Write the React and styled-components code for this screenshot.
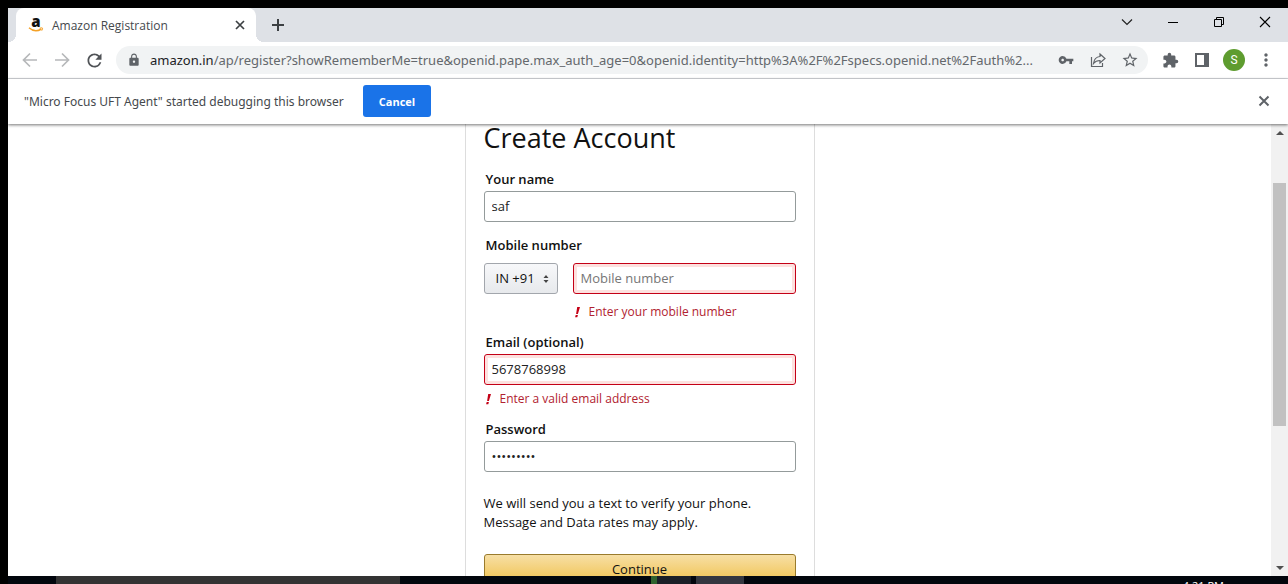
import React from "react";
import styled, { createGlobalStyle } from "styled-components";
import { MdLock, MdVpnKey, MdStarBorder, MdExtension, MdMoreVert, MdRefresh } from "react-icons/md";

const GlobalStyle = createGlobalStyle`
  * { box-sizing: border-box; }
  body { margin: 0; background: #000; font-family: "Open Sans", "Noto Sans", sans-serif; }
  button, input, select { font: inherit; margin: 0; }
`;

const Desktop = styled.div`
  display: flex;
  flex-direction: column;
  height: 100vh;
  padding: 8px 0 0 8px;
  overflow: hidden;
  background: #000;
`;

const Window = styled.div`
  flex: 1;
  min-height: 0;
  display: flex;
  flex-direction: column;
  background: #fff;
`;

const TabStrip = styled.header`
  display: flex;
  align-items: stretch;
  height: 34px;
  padding-left: 8px;
  background: #dee1e6;
`;

const Tab = styled.div`
  position: relative;
  display: flex;
  align-items: center;
  gap: 8px;
  width: 240px;
  padding: 0 8px 0 12px;
  border-radius: 8px 8px 0 0;
  background: #fff;
  font-size: 12px;
  color: #45494d;

  &::before, &::after {
    content: "";
    position: absolute;
    bottom: 0;
    width: 8px;
    height: 8px;
  }
  &::before {
    right: 100%;
    background: radial-gradient(circle at 0 0, #dee1e6 8px, #fff 8px);
  }
  &::after {
    left: 100%;
    background: radial-gradient(circle at 100% 0, #dee1e6 8px, #fff 8px);
  }
`;

const TabTitle = styled.span`
  flex: 1;
  white-space: nowrap;
`;

const IconButton = styled.button`
  display: flex;
  align-items: center;
  justify-content: center;
  flex: none;
  width: ${(p) => p.$width || 32}px;
  height: ${(p) => p.$height || 32}px;
  padding: 0;
  border: 0;
  background: transparent;
  color: ${(p) => p.$color || "#5f6368"};
`;

const WindowControls = styled.div`
  display: flex;
  margin-left: auto;
`;

const Toolbar = styled.div`
  display: flex;
  align-items: center;
  height: 37px;
  padding: 0 6px;
  border-bottom: 1px solid #d5d8dc;
`;

const Omnibox = styled.div`
  flex: 1;
  min-width: 0;
  display: flex;
  align-items: center;
  gap: 9px;
  height: 28px;
  margin: 0 6px;
  padding: 0 2px 0 11px;
  border-radius: 14px;
  background: #f1f3f4;
  color: #5f6368;
`;

const Url = styled.div`
  flex: 1;
  min-width: 0;
  overflow: hidden;
  white-space: nowrap;
  font-family: "Noto Sans", sans-serif;
  font-size: 13px;
  line-height: 20px;
  color: #64686c;

  b { font-weight: 400; color: #202124; }
`;

const OmniboxActions = styled.div`
  display: flex;
`;

const Avatar = styled.button`
  width: 22px;
  height: 22px;
  margin: 0 5px;
  padding: 0;
  border: 0;
  border-radius: 50%;
  background: #5e9c2f;
  color: #fff;
  font-family: Roboto, sans-serif;
  font-size: 12px;
  line-height: 22px;
`;

const InfoBar = styled.div`
  position: relative;
  display: flex;
  align-items: center;
  gap: 12px;
  height: 45px;
  padding: 0 8px 1px 16px;
  background: #fff;
  box-shadow: 0 1px 3px #0000008c;
  font-family: "Noto Sans", sans-serif;
  font-size: 12px;
  color: #45494d;
`;

const InfoText = styled.span`
  min-width: 327px;
`;

const CancelButton = styled.button`
  width: 68px;
  height: 32px;
  padding: 0;
  border: 0;
  border-radius: 3px;
  background: #1a73e8;
  color: #fff;
  font-family: "Open Sans", sans-serif;
  font-size: 11px;
  font-weight: 700;
`;

const InfoClose = styled(IconButton)`
  margin-left: auto;
`;

const Viewport = styled.div`
  flex: 1;
  min-height: 0;
  display: flex;
`;

const Page = styled.main`
  flex: 1;
  display: flex;
  justify-content: center;
  overflow: hidden;
`;

const Card = styled.form`
  width: 350px;
  height: max-content;
  padding: 0 18px 24px;
  border: solid #ddd;
  border-width: 0 1px;
  font-size: 13px;
  line-height: 19px;
  color: #111;
`;

const Heading = styled.h1`
  margin: 0 0 18px;
  font-size: 27px;
  font-weight: 400;
  line-height: 28px;
`;

const Field = styled.div`
  display: flex;
  flex-direction: column;
  gap: ${(p) => p.$gap || 2}px;
  margin-bottom: ${(p) => (p.$invalid ? 12 : 14)}px;
`;

const Label = styled.label`
  padding-left: 2px;
  font-weight: 600;
`;

const TextInput = styled.input`
  width: 100%;
  height: 31px;
  padding: 0 7px 1px;
  border: 1px solid ${(p) => (p.$invalid ? "#c40016" : "#949b9b")};
  border-radius: 3px;
  outline: 0;
  background: #fff;
  box-shadow: ${(p) => (p.$invalid ? "inset 0 0 0 3px #fde1df" : "none")};
  color: #222;

  &::placeholder { color: #767676; opacity: 1; }
`;

const PhoneRow = styled.div`
  display: grid;
  grid-template-columns: 74px 1fr;
  column-gap: 15px;
`;

const CodePicker = styled.div`
  display: grid;
  align-items: center;
  height: 31px;

  > * { grid-area: 1 / 1; }
  svg { justify-self: end; margin-right: 9px; pointer-events: none; }
`;

const CodeSelect = styled.select`
  appearance: none;
  width: 100%;
  height: 31px;
  padding: 0 11px;
  border: 1px solid #a2a6ac;
  border-radius: 3px;
  background: linear-gradient(#f7f8fa, #e7e9ec);
  color: #111;
`;

const ErrorText = styled.p`
  grid-column: 2;
  display: flex;
  align-items: center;
  gap: 9px;
  margin: ${(p) => (p.$inRow ? 9 : 3)}px 0 0;
  padding-left: 2px;
  font-size: 12px;
  line-height: 18px;
  color: #b12230;
`;

const Notice = styled.p`
  margin: 22px 0;
`;

const Submit = styled.button`
  width: 100%;
  height: 31px;
  padding: 0;
  border: 1px solid #9a7b2c;
  border-radius: 3px;
  background: linear-gradient(#f7dfa5, #f0c14b);
  color: #111;
`;

const Scrollbar = styled.div`
  display: flex;
  flex-direction: column;
  align-items: center;
  width: 17px;
  background: #f1f1f1;
`;

const ScrollArrow = styled(IconButton)`
  width: 17px;
  height: 17px;
`;

const ScrollTrack = styled.div`
  flex: 1;
  display: grid;
  grid-template-rows: 42fr 243fr 133fr;
  width: 13px;

  &::before {
    content: "";
    grid-row: 2;
    background: #c1c1c1;
  }
`;

const Taskbar = styled.footer`
  display: flex;
  flex: none;
  height: 8px;
  overflow: hidden;
  background: #02060d;
`;

const TaskItem = styled.div`
  width: ${(p) => p.$width}px;
  background: ${(p) => p.$color || "transparent"};
`;

const Clock = styled.time`
  margin: 5px 64px 0 auto;
  font-size: 11px;
  line-height: 10px;
  color: #fff;
`;

const Stroke = ({ d, size = 16, width = 1, ...rest }) => (
  <svg width={size} height={size} viewBox={`0 0 ${size} ${size}`} fill="none" stroke="currentColor" strokeWidth={width} aria-hidden="true" {...rest}>
    <path d={d} />
  </svg>
);

const AmazonIcon = () => (
  <svg width="16" height="16" viewBox="0 0 16 16" overflow="visible" aria-hidden="true">
    <text x="8" y="10" textAnchor="middle" fontFamily="Open Sans, sans-serif" fontWeight="800" fontSize="15" fill="#111">a</text>
    <path d="M1 10.8 Q7 16.2 13.4 12" fill="none" stroke="#f4a127" strokeWidth="1.5" />
    <path d="M11.6 11.2 Q14.6 10.4 14.6 11.2 Q14.6 12.8 13.7 13.7" fill="none" stroke="#f4a127" />
  </svg>
);

const ErrorMark = () => (
  <svg width="5" height="12" viewBox="0 0 5 12" fill="#c40016" aria-hidden="true">
    <path d="M2.2 1H5L2.9 8H1.1ZM.7 9H2.9L2.3 11.2H.1Z" />
  </svg>
);

export default function App() {
  return (
    <Desktop>
      <GlobalStyle />
      <Window>
        <TabStrip>
          <Tab>
            <AmazonIcon />
            <TabTitle>Amazon Registration</TabTitle>
            <IconButton $width={16} $height={16} $color="#3c4043" aria-label="Close tab">
              <Stroke d="M4 4 12 12M12 4 4 12" width={1.7} />
            </IconButton>
          </Tab>
          <IconButton $width={44} $height={34} $color="#3c4043" aria-label="New tab">
            <Stroke d="M8 2V14M2 8H14" width={2} />
          </IconButton>
          <WindowControls>
            <IconButton $width={46} $height={28} $color="#222" aria-label="Search tabs">
              <Stroke d="M3 5.5 8 10.5 13 5.5" width={1.2} />
            </IconButton>
            <IconButton $width={46} $height={28} $color="#000" aria-label="Minimize">
              <Stroke d="M3 8.5H13" />
            </IconButton>
            <IconButton $width={46} $height={28} $color="#000" aria-label="Restore">
              <Stroke d="M3.5 5.5H10.5V12.5H3.5ZM5.5 5.5V3.5H12.5V10.5H10.5" />
            </IconButton>
            <IconButton $width={46} $height={28} $color="#000" aria-label="Close">
              <Stroke d="M3 3 13 13M13 3 3 13" width={1.1} />
            </IconButton>
          </WindowControls>
        </TabStrip>

        <Toolbar>
          <IconButton $color="#b6b8ba" aria-label="Back">
            <Stroke d="M15 8H2M8 1.5 1.5 8 8 14.5" width={1.7} />
          </IconButton>
          <IconButton $color="#b6b8ba" aria-label="Forward">
            <Stroke d="M1 8H14M8 1.5 14.5 8 8 14.5" width={1.7} />
          </IconButton>
          <IconButton aria-label="Reload"><MdRefresh size={21} color="#505357" /></IconButton>
          <Omnibox>
            <MdLock size={14} />
            <Url>
              <b>amazon.in</b>/ap/register?showRememberMe=true&amp;openid.pape.max_auth_age=0&amp;openid.identity=http%3A%2F%2Fspecs.openid.net%2Fauth%2...
            </Url>
            <OmniboxActions>
              <IconButton aria-label="Passwords"><MdVpnKey size={16} /></IconButton>
              <IconButton aria-label="Share">
                <Stroke d="M1.5 5V14.5H12.5V11M10 2 15 6.5 10 11V8.5C7 8.5 5 9.5 3.5 11.5C4 7.5 6.5 4.8 10 4.5Z" width={1.2} />
              </IconButton>
              <IconButton aria-label="Bookmark"><MdStarBorder size={18} /></IconButton>
            </OmniboxActions>
          </Omnibox>
          <IconButton aria-label="Extensions"><MdExtension size={17} /></IconButton>
          <IconButton aria-label="Side panel">
            <Stroke d="M2 2H14V14H2ZM11 2V14M12.5 2V14" width={2} />
          </IconButton>
          <Avatar>S</Avatar>
          <IconButton aria-label="Menu"><MdMoreVert size={20} /></IconButton>
        </Toolbar>

        <InfoBar>
          <InfoText>"Micro Focus UFT Agent" started debugging this browser</InfoText>
          <CancelButton>Cancel</CancelButton>
          <InfoClose aria-label="Dismiss">
            <Stroke d="M3.5 3.5 12.5 12.5M12.5 3.5 3.5 12.5" width={2} />
          </InfoClose>
        </InfoBar>

        <Viewport>
          <Page>
            <Card onSubmit={(e) => e.preventDefault()}>
              <Heading>Create Account</Heading>
              <Field>
                <Label htmlFor="name">Your name</Label>
                <TextInput id="name" defaultValue="saf" />
              </Field>
              <Field $gap={8} $invalid>
                <Label htmlFor="mobile">Mobile number</Label>
                <PhoneRow>
                  <CodePicker>
                    <CodeSelect aria-label="Country code"><option>IN +91</option></CodeSelect>
                    <svg width="6" height="8" viewBox="0 0 6 8" fill="#444" aria-hidden="true">
                      <path d="M3 0 5.5 3H.5ZM.5 5H5.5L3 8Z" />
                    </svg>
                  </CodePicker>
                  <TextInput id="mobile" type="tel" placeholder="Mobile number" $invalid />
                  <ErrorText $inRow><ErrorMark />Enter your mobile number</ErrorText>
                </PhoneRow>
              </Field>
              <Field $invalid>
                <Label htmlFor="email">Email (optional)</Label>
                <TextInput id="email" defaultValue="5678768998" $invalid />
                <ErrorText><ErrorMark />Enter a valid email address</ErrorText>
              </Field>
              <Field>
                <Label htmlFor="password">Password</Label>
                <TextInput id="password" type="password" defaultValue="abcdefghi" />
              </Field>
              <Notice>We will send you a text to verify your phone. Message and Data rates may apply.</Notice>
              <Submit type="submit">Continue</Submit>
            </Card>
          </Page>
          <Scrollbar>
            <ScrollArrow aria-label="Scroll up">
              <svg width="8" height="4" viewBox="0 0 8 4" fill="#505050"><path d="M4 0 8 4H0Z" /></svg>
            </ScrollArrow>
            <ScrollTrack />
            <ScrollArrow aria-label="Scroll down">
              <svg width="8" height="4" viewBox="0 0 8 4" fill="#505050"><path d="M0 0H8L4 4Z" /></svg>
            </ScrollArrow>
          </Scrollbar>
        </Viewport>
      </Window>
      <Taskbar>
        <TaskItem $width={48} />
        <TaskItem $width={344} $color="#333" />
        <TaskItem $width={251} />
        <TaskItem $width={6} $color="#2f632f" />
        <TaskItem $width={34} $color="#1a1f27" />
        <TaskItem $width={5} />
        <TaskItem $width={48} $color="#343740" />
        <Clock>4:21 PM</Clock>
      </Taskbar>
    </Desktop>
  );
}
